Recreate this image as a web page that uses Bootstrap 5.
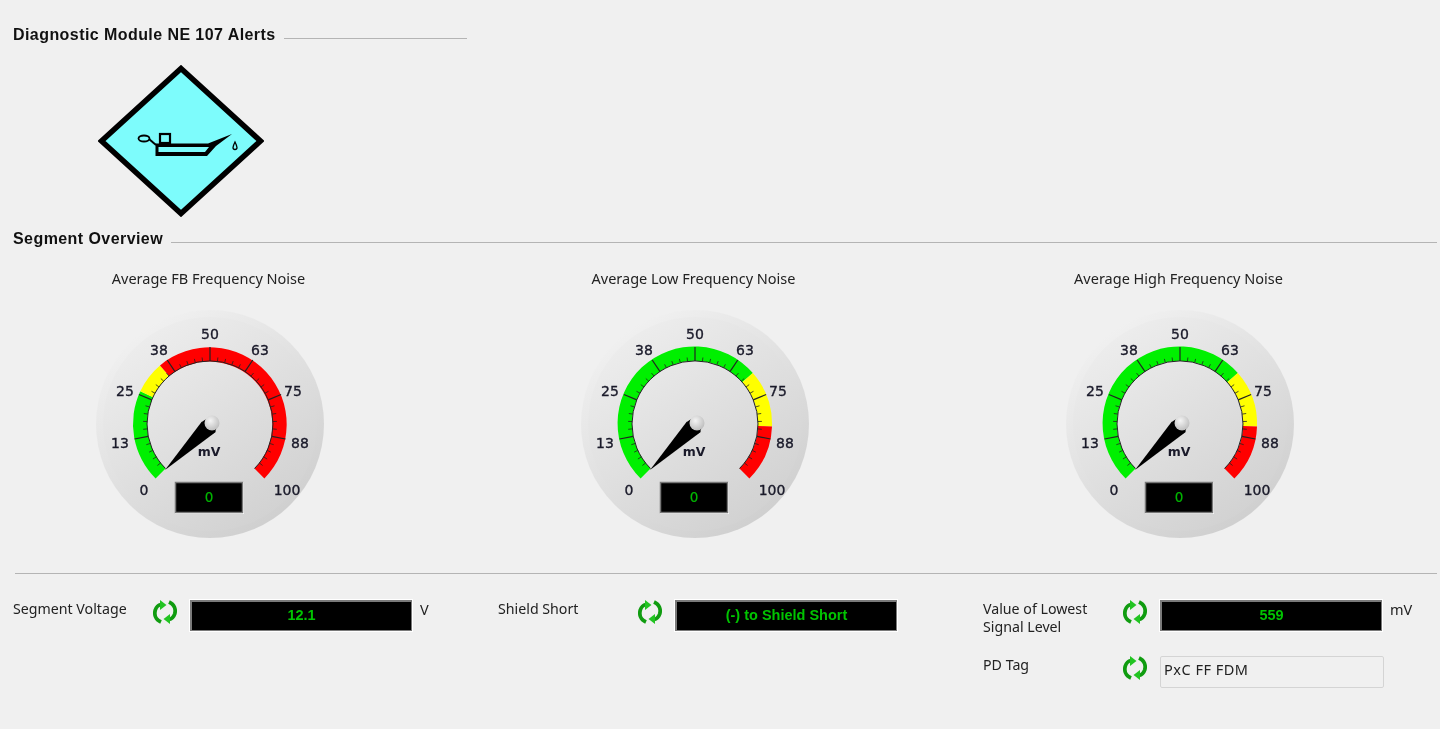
<!DOCTYPE html>
<html lang="en">
<head>
    <meta charset="UTF-8">
    <meta name="viewport" content="width=device-width, initial-scale=1.0">
    <title>Diagnostic Module</title>
    <link href="https://cdn.jsdelivr.net/npm/bootstrap@5.3.0/dist/css/bootstrap.min.css" rel="stylesheet">
    <style>
        body {
            background-color: #f0f0f0;
            color: #222;
            font-family: "Noto Sans", "Liberation Sans", sans-serif;
            font-size: 14.5px;
            overflow: hidden;
        }

        .panel-wrap {
            height: 729px;
            padding: 25px 3px 0 13px;
            filter: blur(0.5px);
        }

        .group-head {
            font-family: "Liberation Sans", sans-serif;
            font-weight: 700;
            font-size: 16px;
            letter-spacing: 0.43px;
            line-height: 20px;
            color: #111;
            white-space: nowrap;
        }

        .group-line {
            height: 1px;
            margin-top: 7px;
            background-color: #b4b4b4;
        }

        .alert-sign { margin: 20px 0 12px 85px; display: block; }

        .gauge-row, .value-row { display: grid; grid-template-columns: 485px 485px 1fr; }

        .gauge-row { margin-top: 19px; }

        .gauge-title { width: 391px; line-height: 20px; text-align: center; }

        .gauge-dial { display: block; margin: 22px 0 0 83px; }

        .gauge-dial text {
            font-family: "DejaVu Sans", sans-serif;
            font-size: 14px;
            fill: #1a1a2a;
            stroke: #1a1a2a;
            stroke-width: 0.35px;
            text-anchor: middle;
        }

        .split-line { height: 1px; margin: 35px 0 26px 2px; background-color: #b4b4b4; }

        .value-label { width: 140px; font-size: 14.2px; line-height: 18px; }

        .value-icon { width: 24px; height: 26px; margin: -1px 13px 0 0; flex: none; }

        .value-box {
            width: 222px;
            height: 31px;
            line-height: 27px;
            text-align: center;
            background-color: #000;
            border: 2px solid #7a7a7a;
            border-right-width: 1px;
            border-bottom-width: 1px;
            outline: 1px solid #fff;
            color: #00c400;
            font-family: "Liberation Sans", sans-serif;
            font-weight: 700;
            font-size: 14.5px;
            flex: none;
        }

        .value-unit { margin: -1px 0 0 8px; }

        .tag-row { margin-top: 20px; }

        .tag-box {
            width: 224px;
            height: 32px;
            line-height: 24px;
            padding-left: 3px;
            letter-spacing: 0.5px;
            border: 1px solid #d4d4d4;
            border-radius: 2px;
            flex: none;
        }
    </style>
</head>
<body>
    <div class="panel-wrap">
        <!-- NE 107 -->
        <div class="d-flex align-items-center">
            <div class="group-head">Diagnostic Module NE 107 Alerts</div>
            <div class="group-line ms-2" style="width: 183px"></div>
        </div>
        <svg class="alert-sign" width="166" height="152" viewBox="98 65 166 152">
            <polygon points="181,68.500 260.500,141 181,213.500 101.500,141" fill="#7dfcfc" stroke="#000" stroke-width="5.500"/>
            <ellipse cx="144" cy="138.500" rx="5.500" ry="3" fill="none" stroke="#000" stroke-width="1.800"/>
            <rect x="160" y="134" width="10" height="9" fill="none" stroke="#000" stroke-width="2.200"/>
            <path d="M149 139 L156 145" fill="none" stroke="#000" stroke-width="2"/>
            <path d="M155.500 143.500 H208 L232 134 L216 146 L207 156 H155.500 Z M158.500 147 V152 H205 L209 147 Z" fill="#000" fill-rule="evenodd"/>
            <path d="M235 142 C233.500 145 233 146 233 147.500 A2 2 0 0 0 237 147.500 C237 146 236.500 145 235 142 Z" fill="none" stroke="#000" stroke-width="1.300"/>
        </svg>

        <!-- Segment overview -->
        <div class="d-flex align-items-center">
            <div class="group-head">Segment Overview</div>
            <div class="group-line flex-grow-1 ms-2"></div>
        </div>

        <div class="gauge-row">
            <div>
                <div class="gauge-title">Average FB Frequency Noise</div>
                <svg class="gauge-dial" width="228" height="228" data-bands="0,26,#00f000;26,35,#ffff00;35,100,#ff0000"></svg>
            </div>
            <div>
                <div class="gauge-title">Average Low Frequency Noise</div>
                <svg class="gauge-dial" width="228" height="228" data-bands="0,68,#00f000;68,84,#ffff00;84,100,#ff0000"></svg>
            </div>
            <div>
                <div class="gauge-title">Average High Frequency Noise</div>
                <svg class="gauge-dial" width="228" height="228" data-bands="0,68,#00f000;68,84,#ffff00;84,100,#ff0000"></svg>
            </div>
        </div>

        <div class="split-line"></div>

        <div class="value-row">
            <div class="d-flex">
                <div class="value-label">Segment Voltage</div>
                <svg class="value-icon"><use href="#refresh"/></svg>
                <div class="value-box">12.1</div>
                <div class="value-unit">V</div>
            </div>
            <div class="d-flex">
                <div class="value-label">Shield Short</div>
                <svg class="value-icon"><use href="#refresh"/></svg>
                <div class="value-box">(-) to Shield Short</div>
            </div>
            <div>
                <div class="d-flex">
                    <div class="value-label">Value of Lowest Signal Level</div>
                    <svg class="value-icon"><use href="#refresh"/></svg>
                    <div class="value-box">559</div>
                    <div class="value-unit">mV</div>
                </div>
                <div class="d-flex tag-row">
                    <div class="value-label">PD Tag</div>
                    <svg class="value-icon"><use href="#refresh"/></svg>
                    <div class="tag-box">PxC FF FDM</div>
                </div>
            </div>
        </div>
    </div>

    <svg width="0" height="0" class="position-absolute">
        <defs>
            <symbol id="refresh" viewBox="0 0 24 26">
                <path d="M8 23 C2.500 20.500 1 15.500 2.300 11 C3.300 8 5.500 6 8 5.500" fill="none" stroke="#109c10" stroke-width="3.800"/>
                <path d="M7 1 L13.500 6 L7 11 Z" fill="#22c422"/>
                <path d="M16 3 C21.500 5.500 23 10.500 21.700 15 C20.700 18 18.500 20 16 20.500" fill="none" stroke="#109c10" stroke-width="3.800"/>
                <path d="M17 15 L10.500 20 L17 25 Z" fill="#22c422"/>
            </symbol>
            <linearGradient id="rimGrad" x1="0.15" y1="0.05" x2="0.8" y2="1">
                <stop offset="0" stop-color="#f2f2f2"/>
                <stop offset="1" stop-color="#cdcdcd"/>
            </linearGradient>
            <linearGradient id="faceGrad" x1="0.15" y1="0.05" x2="0.8" y2="1">
                <stop offset="0" stop-color="#eeeeee"/>
                <stop offset="1" stop-color="#d0d0d0"/>
            </linearGradient>
            <radialGradient id="ballGrad" cx="0.4" cy="0.35" r="0.7">
                <stop offset="0" stop-color="#f4f4f4"/>
                <stop offset="1" stop-color="#bbb"/>
            </radialGradient>
        </defs>
    </svg>

    <script src="https://cdn.jsdelivr.net/npm/bootstrap@5.3.0/dist/js/bootstrap.bundle.min.js"></script>
    <script>
        const CX = 114, CY = 114;
        // label, x and y relative to the dial centre
        const SCALE = [
            ['0', -66, 66], ['13', -90, 19], ['25', -85, -33], ['38', -51, -74], ['50', 0, -90],
            ['63', 50, -74], ['75', 83, -33], ['88', 90, 19], ['100', 77, 66]
        ];

        function pt(value, r) {
            const a = (225 - value * 2.7) * Math.PI / 180;
            return [(CX + r * Math.cos(a)).toFixed(1), (CY - r * Math.sin(a)).toFixed(1)];
        }

        function band(from, to, color) {
            const r1 = 77, r2 = 63;
            const [a, b] = pt(from, r1), [c, d] = pt(to, r1), [e, f] = pt(to, r2), [g, h] = pt(from, r2);
            const large = (to - from) * 2.7 > 180 ? 1 : 0;
            return `<path d="M${a} ${b} A${r1} ${r1} 0 ${large} 1 ${c} ${d} L${e} ${f} A${r2} ${r2} 0 ${large} 0 ${g} ${h} Z" fill="${color}"/>`;
        }

        document.querySelectorAll('.gauge-dial').forEach(svg => {
            let out = `<circle cx="114" cy="114" r="114" fill="url(#rimGrad)"/>`;
            out += `<circle cx="114" cy="114" r="107" fill="url(#faceGrad)"/>`;
            svg.dataset.bands.split(';').forEach(b => {
                const [from, to, color] = b.split(',');
                out += band(+from, +to, color);
            });
            // inner black arc, then ticks
            const [ax, ay] = pt(0, 63), [bx, by] = pt(100, 63);
            out += `<path d="M${ax} ${ay} A63 63 0 1 1 ${bx} ${by}" fill="none" stroke="#222" stroke-width="1"/>`;
            for (let i = 1; i < 40; i++) {
                const major = i % 5 === 0;
                const [x1, y1] = pt(i * 2.5, 63), [x2, y2] = pt(i * 2.5, major ? 77 : 67);
                out += `<line x1="${x1}" y1="${y1}" x2="${x2}" y2="${y2}" stroke="#222" stroke-width="${major ? 1.2 : 0.8}"/>`;
            }
            SCALE.forEach(s => {
                out += `<text x="${CX + s[1]}" y="${CY + s[2] + 5}">${s[0]}</text>`;
            });
            // needle sits at zero
            out += `<path d="M69 160 L120 121.700 L105.700 111.700 Z" fill="#000"/>`;
            out += `<circle cx="112.500" cy="117" r="8" fill="#000"/>`;
            out += `<circle cx="116" cy="113" r="7.500" fill="url(#ballGrad)"/>`;
            out += `<text x="113" y="146" style="font-size:12.500px;font-weight:700;stroke-width:0">mV</text>`;
            // readout
            out += `<rect x="79" y="172" width="69" height="32" fill="#fff"/>`;
            out += `<rect x="79.500" y="172.500" width="67" height="30" fill="#000" stroke="#777" stroke-width="1.500"/>`;
            out += `<text x="113" y="192" style="fill:#00b800;stroke:#00b800;stroke-width:0.2px;font-size:13.500px">0</text>`;
            svg.innerHTML = out;
        });
    </script>
</body>
</html>
